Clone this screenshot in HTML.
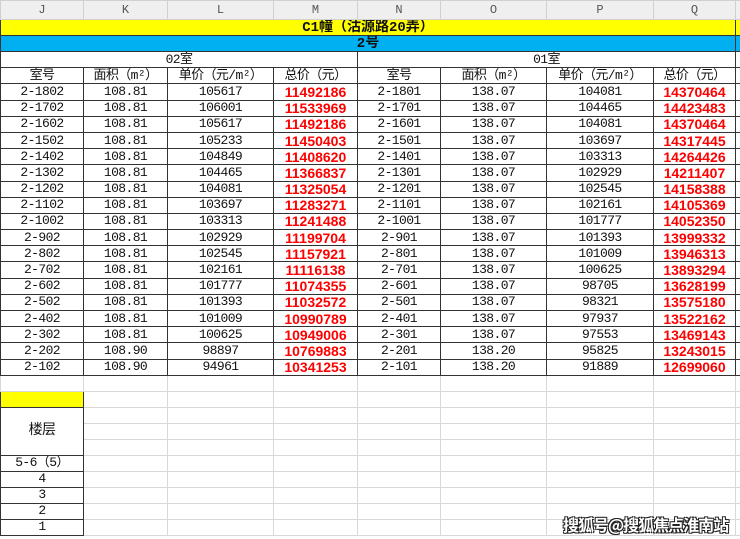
<!DOCTYPE html>
<html><head><meta charset="utf-8"><style>
body{margin:0;width:740px;height:539px;overflow:hidden;background:#fff;position:relative;font-family:"Liberation Mono","Noto Sans CJK SC",monospace;}
table{border-collapse:collapse;table-layout:fixed;position:absolute;left:0;top:0;width:740px;}
td{padding:0;text-align:center;font-size:13px;color:#111;white-space:nowrap;overflow:hidden;border:1px solid #d8d8d8;line-height:14px;}
.d td,.k{font-size:13px;letter-spacing:-0.6px;}
tr.h td{background:#efefef;color:#555;font-size:12px;border-color:#d0d0d0;height:18px;}
.d td{border:1px solid #333;height:15.2px;}
td.r{color:#f00;font-weight:bold;font-family:"Liberation Sans",sans-serif;font-size:14px;letter-spacing:0;}
.y{background:#ff0;font-weight:bold;border:1px solid #333!important;}
.b{background:#00b0f0;font-weight:bold;border:1px solid #333!important;}
.k{border:1px solid #333!important;}
.wm{position:absolute;left:563px;top:512px;font:bold 16px "Noto Sans CJK SC",sans-serif;color:#fff;white-space:nowrap;letter-spacing:-1px;text-shadow:1px 1px 0 #222,-1px -1px 0 #222,1px -1px 0 #222,-1px 1px 0 #222;}
</style></head><body>
<table>
<colgroup><col style="width:83px"><col style="width:84px"><col style="width:106px"><col style="width:84px"><col style="width:83px"><col style="width:106px"><col style="width:107px"><col style="width:82px"><col style="width:5px"></colgroup>
<tr class="h"><td>J</td><td>K</td><td>L</td><td>M</td><td>N</td><td>O</td><td>P</td><td>Q</td><td></td></tr>
<tr style="height:16px"><td colspan="8" class="y" style="font-size:14px;">C1幢（沽源路20弄）</td><td class="y"></td></tr>
<tr style="height:16px"><td colspan="8" class="b" style="font-size:14px;">2号</td><td class="b"></td></tr>
<tr class="d"><td colspan="4">02室</td><td colspan="4">01室</td><td></td></tr>
<tr class="d"><td>室号</td><td>面积（m²）</td><td>单价（元/m²）</td><td>总价（元）</td><td>室号</td><td>面积（m²）</td><td>单价（元/m²）</td><td>总价（元）</td><td></td></tr>
<tr class="d"><td>2-1802</td><td>108.81</td><td>105617</td><td class="r">11492186</td><td>2-1801</td><td>138.07</td><td>104081</td><td class="r">14370464</td><td></td></tr>
<tr class="d"><td>2-1702</td><td>108.81</td><td>106001</td><td class="r">11533969</td><td>2-1701</td><td>138.07</td><td>104465</td><td class="r">14423483</td><td></td></tr>
<tr class="d"><td>2-1602</td><td>108.81</td><td>105617</td><td class="r">11492186</td><td>2-1601</td><td>138.07</td><td>104081</td><td class="r">14370464</td><td></td></tr>
<tr class="d"><td>2-1502</td><td>108.81</td><td>105233</td><td class="r">11450403</td><td>2-1501</td><td>138.07</td><td>103697</td><td class="r">14317445</td><td></td></tr>
<tr class="d"><td>2-1402</td><td>108.81</td><td>104849</td><td class="r">11408620</td><td>2-1401</td><td>138.07</td><td>103313</td><td class="r">14264426</td><td></td></tr>
<tr class="d"><td>2-1302</td><td>108.81</td><td>104465</td><td class="r">11366837</td><td>2-1301</td><td>138.07</td><td>102929</td><td class="r">14211407</td><td></td></tr>
<tr class="d"><td>2-1202</td><td>108.81</td><td>104081</td><td class="r">11325054</td><td>2-1201</td><td>138.07</td><td>102545</td><td class="r">14158388</td><td></td></tr>
<tr class="d"><td>2-1102</td><td>108.81</td><td>103697</td><td class="r">11283271</td><td>2-1101</td><td>138.07</td><td>102161</td><td class="r">14105369</td><td></td></tr>
<tr class="d"><td>2-1002</td><td>108.81</td><td>103313</td><td class="r">11241488</td><td>2-1001</td><td>138.07</td><td>101777</td><td class="r">14052350</td><td></td></tr>
<tr class="d"><td>2-902</td><td>108.81</td><td>102929</td><td class="r">11199704</td><td>2-901</td><td>138.07</td><td>101393</td><td class="r">13999332</td><td></td></tr>
<tr class="d"><td>2-802</td><td>108.81</td><td>102545</td><td class="r">11157921</td><td>2-801</td><td>138.07</td><td>101009</td><td class="r">13946313</td><td></td></tr>
<tr class="d"><td>2-702</td><td>108.81</td><td>102161</td><td class="r">11116138</td><td>2-701</td><td>138.07</td><td>100625</td><td class="r">13893294</td><td></td></tr>
<tr class="d"><td>2-602</td><td>108.81</td><td>101777</td><td class="r">11074355</td><td>2-601</td><td>138.07</td><td>98705</td><td class="r">13628199</td><td></td></tr>
<tr class="d"><td>2-502</td><td>108.81</td><td>101393</td><td class="r">11032572</td><td>2-501</td><td>138.07</td><td>98321</td><td class="r">13575180</td><td></td></tr>
<tr class="d"><td>2-402</td><td>108.81</td><td>101009</td><td class="r">10990789</td><td>2-401</td><td>138.07</td><td>97937</td><td class="r">13522162</td><td></td></tr>
<tr class="d"><td>2-302</td><td>108.81</td><td>100625</td><td class="r">10949006</td><td>2-301</td><td>138.07</td><td>97553</td><td class="r">13469143</td><td></td></tr>
<tr class="d"><td>2-202</td><td>108.90</td><td>98897</td><td class="r">10769883</td><td>2-201</td><td>138.20</td><td>95825</td><td class="r">13243015</td><td></td></tr>
<tr class="d"><td>2-102</td><td>108.90</td><td>94961</td><td class="r">10341253</td><td>2-101</td><td>138.20</td><td>91889</td><td class="r">12699060</td><td></td></tr>
<tr style="height:16px"><td></td><td></td><td></td><td></td><td></td><td></td><td></td><td></td><td></td></tr>
<tr style="height:16px"><td class="y"></td><td></td><td></td><td></td><td></td><td></td><td></td><td></td><td></td></tr>
<tr style="height:16px"><td rowspan="3" class="k" style="font-size:14px">楼层</td><td></td><td></td><td></td><td></td><td></td><td></td><td></td><td></td></tr>
<tr style="height:16px"><td></td><td></td><td></td><td></td><td></td><td></td><td></td><td></td></tr>
<tr style="height:16px"><td></td><td></td><td></td><td></td><td></td><td></td><td></td><td></td></tr>
<tr style="height:16px"><td class="k">5-6（5）</td><td></td><td></td><td></td><td></td><td></td><td></td><td></td><td></td></tr>
<tr style="height:16px"><td class="k">4</td><td></td><td></td><td></td><td></td><td></td><td></td><td></td><td></td></tr>
<tr style="height:16px"><td class="k">3</td><td></td><td></td><td></td><td></td><td></td><td></td><td></td><td></td></tr>
<tr style="height:16px"><td class="k">2</td><td></td><td></td><td></td><td></td><td></td><td></td><td></td><td></td></tr>
<tr style="height:16px"><td class="k">1</td><td></td><td></td><td></td><td></td><td></td><td></td><td></td><td></td></tr>
</table>
<div class="wm">搜狐号@搜狐焦点淮南站</div>
</body></html>
